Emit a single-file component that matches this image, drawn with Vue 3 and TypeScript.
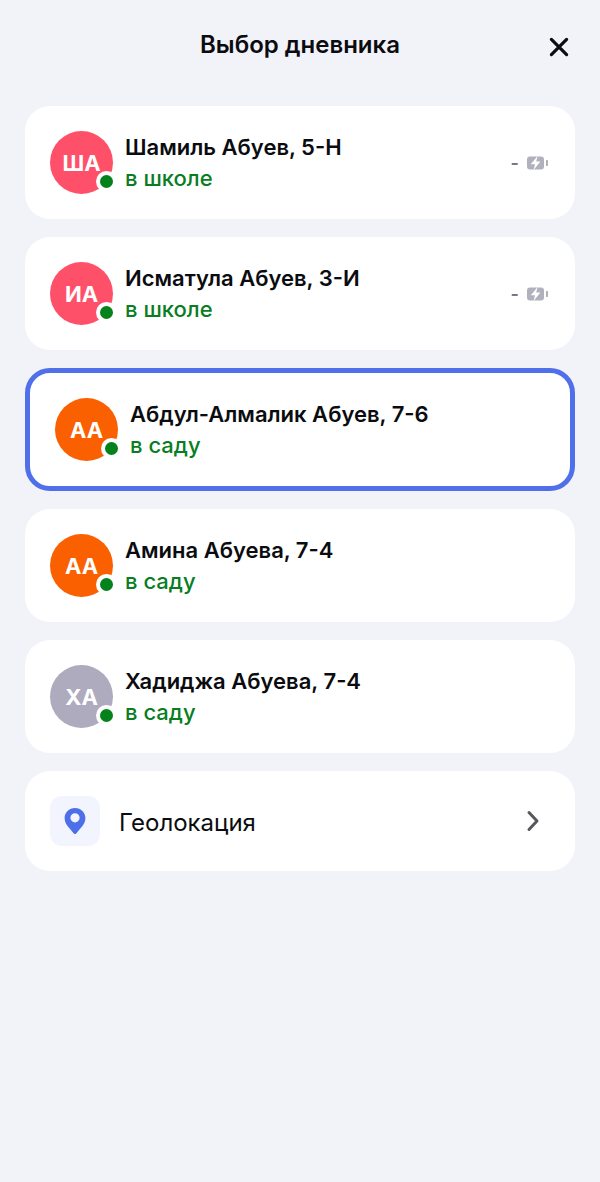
<script setup lang="ts">
import { ref } from 'vue'

interface Child {
  id: number
  initials: string
  name: string
  status: string
  tone: 'pink' | 'orange' | 'gray'
  battery?: string
}

const children: Child[] = [
  { id: 1, initials: 'ША', name: 'Шамиль Абуев, 5-Н', status: 'в школе', tone: 'pink', battery: '-' },
  { id: 2, initials: 'ИА', name: 'Исматула Абуев, 3-И', status: 'в школе', tone: 'pink', battery: '-' },
  { id: 3, initials: 'АА', name: 'Абдул-Алмалик Абуев, 7-6', status: 'в саду', tone: 'orange' },
  { id: 4, initials: 'АА', name: 'Амина Абуева, 7-4', status: 'в саду', tone: 'orange' },
  { id: 5, initials: 'ХА', name: 'Хадиджа Абуева, 7-4', status: 'в саду', tone: 'gray' },
]

const selectedId = ref(3)
</script>

<template>
  <main class="page">
    <header class="header">
      <h1 class="title">Выбор дневника</h1>
      <button class="close" type="button" aria-label="Закрыть">
        <svg width="22" height="22" viewBox="0 0 22 22" fill="none">
          <path d="M3.4 3.4L18.6 18.6M18.6 3.4L3.4 18.6" stroke="#0b0c14" stroke-width="3.2" stroke-linecap="round" />
        </svg>
      </button>
    </header>

    <div class="list">
      <button
        v-for="child in children"
        :key="child.id"
        type="button"
        class="card"
        :class="{ selected: child.id === selectedId }"
        :aria-pressed="child.id === selectedId"
        @click="selectedId = child.id"
      >
        <span class="avatar" :class="child.tone">
          {{ child.initials }}
          <span class="dot"></span>
        </span>
        <span class="info">
          <span class="name">{{ child.name }}</span>
          <span class="status">{{ child.status }}</span>
        </span>
        <span v-if="child.battery" class="battery">
          <span>{{ child.battery }}</span>
          <svg width="22" height="14" viewBox="0 0 22 14">
            <rect x="0" y="0.5" width="17" height="13" rx="3" fill="#b1b0bd" />
            <path d="M10.6 0L9.2 5.6H13.4L6.6 14L8 8.2H3.8Z" fill="#fff" />
            <path d="M19 4H20.2Q21 4 21 4.8V9.2Q21 10 20.2 10H19Z" fill="#b1b0bd" />
          </svg>
        </span>
      </button>

      <a class="card" href="#location">
        <span class="pin">
          <svg width="22" height="28" viewBox="0 0 22 28">
            <path
              d="M11 1C5.1 1 .6 5.5.6 11.2C.6 15 2.7 18 5 20.7L9.8 26.4Q11 27.7 12.2 26.4L17 20.7C19.3 18 21.4 15 21.4 11.2C21.4 5.5 16.9 1 11 1ZM11 6.2A4.6 4.6 0 1 1 11 15.4A4.6 4.6 0 1 1 11 6.2Z"
              fill="#4d6fea"
              fill-rule="evenodd"
            />
          </svg>
        </span>
        <span class="link-text">Геолокация</span>
        <svg class="chevron" width="16" height="24" viewBox="0 0 16 24" fill="none">
          <path d="M4 3.5L12 12L4 20.5" stroke="#58585c" stroke-width="3" stroke-linecap="round" stroke-linejoin="round" />
        </svg>
      </a>
    </div>
  </main>
</template>

<style>
body {
  background: #f2f3f9;
}
</style>

<style scoped>
.page {
  min-height: 100vh;
  box-sizing: border-box;
  padding: 0 25px 25px;
  background: #f2f3f9;
  color: #0b0c10;
  font-family: Inter, "Liberation Sans", sans-serif;
}

.header {
  display: grid;
  grid-template-columns: 32px 1fr 32px;
  align-items: center;
  height: 94px;
}

.title {
  grid-column: 2;
  margin: 0;
  padding-bottom: 4px;
  font-size: 24px;
  font-weight: 600;
  line-height: 32px;
  text-align: center;
}

.close {
  display: flex;
  align-items: center;
  justify-content: center;
  width: 32px;
  height: 32px;
  padding: 0;
  border: 0;
  background: none;
  cursor: pointer;
}

.list {
  display: flex;
  flex-direction: column;
  gap: 18px;
  padding-top: 12px;
}

.card {
  display: flex;
  align-items: center;
  box-sizing: border-box;
  width: 100%;
  padding: 25px;
  border: 0;
  border-radius: 25px;
  background: #fff;
  color: inherit;
  font: inherit;
  text-align: left;
  text-decoration: none;
  cursor: pointer;
}

.selected {
  border: 5px solid #4f70e8;
}

.avatar {
  position: relative;
  flex: none;
  width: 63px;
  height: 63px;
  border-radius: 50%;
  color: #fff;
  font-size: 22px;
  font-weight: 700;
  line-height: 64px;
  text-align: center;
}

.pink {
  background: #ff5069;
}

.orange {
  background: #fb6000;
}

.gray {
  background: #adabbd;
}

.dot {
  position: absolute;
  right: -4px;
  bottom: 2px;
  width: 13px;
  height: 13px;
  border: 4px solid #fff;
  border-radius: 50%;
  background: #06821c;
}

.info {
  display: flex;
  flex: 1;
  flex-direction: column;
  min-width: 0;
  margin-left: 12px;
  padding-top: 1px;
  font-size: 22px;
  line-height: 31px;
}

.name {
  font-weight: 600;
}

.status {
  color: #087d22;
  font-weight: 500;
}

.battery {
  display: flex;
  align-items: center;
  gap: 8px;
  margin-right: 1px;
  color: #77767e;
  font-size: 18px;
  font-weight: 600;
  line-height: 24px;
}

.pin {
  display: flex;
  flex: none;
  align-items: center;
  justify-content: center;
  width: 50px;
  height: 50px;
  border-radius: 12px;
  background: #f2f5fe;
}

.link-text {
  flex: 1;
  margin-left: 19px;
  padding-top: 3px;
  font-size: 24px;
  line-height: 32px;
}

.chevron {
  margin-right: 9px;
}
</style>
